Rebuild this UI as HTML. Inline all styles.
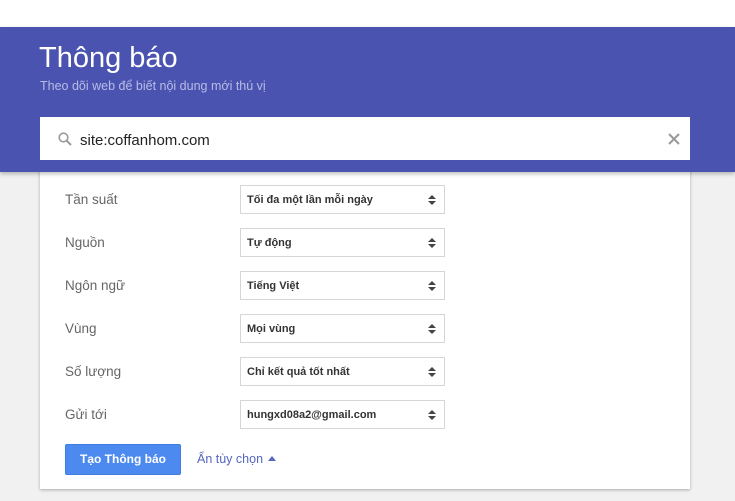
<!DOCTYPE html>
<html><head><meta charset="utf-8"><style>
*{margin:0;padding:0;box-sizing:border-box}
body{width:735px;height:501px;overflow:hidden;background:#f1f1f1;font-family:"Liberation Sans",Arial,sans-serif;position:relative}
.top{position:absolute;left:0;top:0;width:735px;height:27px;background:#fff}
.hdr{position:absolute;left:0;top:27px;width:735px;height:145px;background:#4a53b0;box-shadow:0 2px 4px rgba(0,0,0,.25);z-index:2}
.h1{position:absolute;left:39px;top:15px;color:#fff;font-size:29px;font-weight:300}
.sub{position:absolute;left:40px;top:52px;color:#b8bde6;font-size:12.5px}
.search{position:absolute;left:40px;top:117px;width:650px;height:43px;background:#fff;z-index:3}
.search .t{position:absolute;left:40px;top:15px;font-size:15px;color:#222}
.card{position:absolute;left:40px;top:160px;width:650px;height:329px;background:#fff;box-shadow:0 1px 3px rgba(0,0,0,.3);z-index:1}
.lbl{position:absolute;left:65px;font-size:13.5px;color:#666;z-index:3}
.sel{position:absolute;left:240px;width:205px;height:29px;border:1px solid #d6d6d6;background:#fff;font-size:11px;font-weight:bold;color:#333;padding:8px 0 0 6px;z-index:3}
.sel:after{content:"";position:absolute;right:8px;top:9px;border:4px solid transparent;border-bottom:4px solid #444;border-top:0}
.sel:before{content:"";position:absolute;right:8px;top:15px;border:4px solid transparent;border-top:4px solid #444;border-bottom:0}
.btn{position:absolute;left:65px;top:444px;width:116px;height:31px;background:#4d8af0;border:1px solid #3f7de0;border-radius:2px;color:#fff;font-size:12px;font-weight:bold;text-align:center;line-height:29px;z-index:3}
.lnk{position:absolute;left:197px;top:452px;font-size:12.5px;color:#5566c0;z-index:3}
.tri{position:absolute;left:268px;top:456px;border:4px solid transparent;border-bottom:5px solid #5566c0;border-top:0;z-index:3}
</style></head><body>
<div class="top"></div>
<div class="hdr"><div class="h1">Thông báo</div><div class="sub">Theo dõi web để biết nội dung mới thú vị</div></div>
<div class="search">
<svg style="position:absolute;left:18px;top:15px" width="14" height="14" viewBox="0 0 14 14"><circle cx="5.5" cy="5.5" r="4.3" fill="none" stroke="#999" stroke-width="1.6"/><line x1="8.6" y1="8.6" x2="13" y2="13" stroke="#999" stroke-width="2"/></svg>
<div class="t">site:coffanhom.com</div>
<svg style="position:absolute;left:628px;top:16px" width="12" height="12" viewBox="0 0 12 12"><path d="M1 1L11 11M11 1L1 11" stroke="#999" stroke-width="2"/></svg>
</div>
<div class="card"></div>
<div class="lbl" style="top:192px">Tần suất</div><div class="sel" style="top:185px">Tối đa một lần mỗi ngày</div>
<div class="lbl" style="top:235px">Nguồn</div><div class="sel" style="top:228px">Tự động</div>
<div class="lbl" style="top:278px">Ngôn ngữ</div><div class="sel" style="top:271px">Tiếng Việt</div>
<div class="lbl" style="top:321px">Vùng</div><div class="sel" style="top:314px">Mọi vùng</div>
<div class="lbl" style="top:364px">Số lượng</div><div class="sel" style="top:357px">Chỉ kết quả tốt nhất</div>
<div class="lbl" style="top:407px">Gửi tới</div><div class="sel" style="top:400px">hungxd08a2@gmail.com</div>
<div class="btn">Tạo Thông báo</div>
<div class="lnk">Ẩn tùy chọn</div><div class="tri"></div>
</body></html>
